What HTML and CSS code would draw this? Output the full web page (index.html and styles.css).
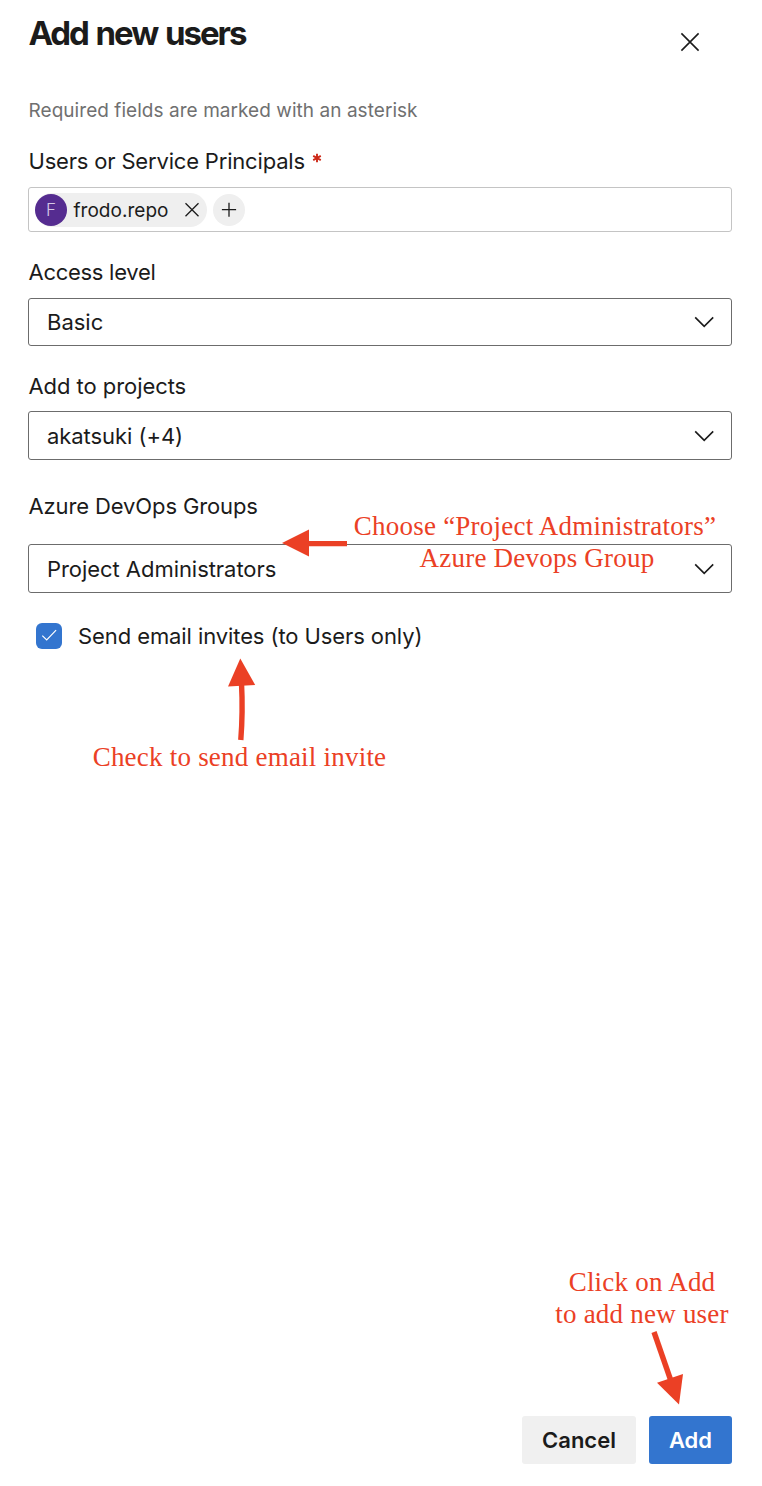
FILE: index.html
```html
<!DOCTYPE html>
<html lang="en">
<head>
<meta charset="utf-8">
<title>Add new users</title>
<link rel="stylesheet" href="styles.css">
</head>
<body>
<main class="panel">
  <header class="header">
    <h1 class="title">Add new users</h1>
    <button class="close" aria-label="Close">
      <svg width="20" height="20" viewBox="0 0 20 20"><path d="M1.4 1.4l17.2 17.2M18.6 1.4L1.4 18.6"/></svg>
    </button>
  </header>

  <p class="hint">Required fields are marked with an asterisk</p>

  <section class="field">
    <div class="label"><span class="t-users">Users or Service Principals</span><svg class="required" width="10" height="10" viewBox="0 0 10 10" aria-label="required"><path d="M5 .8v8.4M1.2 2.9l7.6 4.2M8.8 2.9L1.2 7.1"/></svg></div>
    <div class="picker">
      <div class="chip">
        <span class="avatar">F</span>
        <span class="chip-name">frodo.repo</span>
        <svg class="chip-remove" width="16" height="16" viewBox="0 0 16 16"><path d="M1.5 1.2l13 13M14.5 1.2l-13 13"/></svg>
      </div>
      <button class="add-more" aria-label="Add another">
        <svg width="16" height="16" viewBox="0 0 16 16"><path d="M8 .8v14M.9 7.6h14.2"/></svg>
      </button>
    </div>
  </section>

  <section class="field access">
    <div class="label"><span class="t-access">Access level</span></div>
    <div class="select"><span>Basic</span>
      <svg class="chevron" width="20" height="12" viewBox="0 0 20 12"><path d="M1.2 1.4l9 9 9-9"/></svg>
    </div>
  </section>

  <section class="field projects">
    <div class="label"><span class="t-projects">Add to projects</span></div>
    <div class="select"><span class="t-projects">akatsuki (+4)</span>
      <svg class="chevron" width="20" height="12" viewBox="0 0 20 12"><path d="M1.2 1.4l9 9 9-9"/></svg>
    </div>
  </section>

  <section class="field groups">
    <div class="label"><span class="t-groups">Azure DevOps Groups</span></div>
    <div class="select"><span class="t-admins">Project Administrators</span>
      <svg class="chevron" width="20" height="12" viewBox="0 0 20 12"><path d="M1.2 1.4l9 9 9-9"/></svg>
    </div>
  </section>

  <div class="check-row">
    <span class="checkbox"><svg width="26" height="26" viewBox="0 0 26 26"><path d="M6.3 12.6l4.4 4.3 9.4-9.7"/></svg></span>
    <span class="t-send">Send email invites (to Users only)</span>
  </div>

  <footer class="footer">
    <button class="btn">Cancel</button>
    <button class="btn primary">Add</button>
  </footer>

  <div class="note note-group">Choose “Project Administrators”<div class="second-line">Azure Devops Group</div></div>
  <div class="note note-check">Check to send email invite</div>
  <div class="note note-add">Click on Add<br>to add new user</div>
  <svg class="arrows" width="762" height="1486" viewBox="0 0 762 1486">
    <path class="shaft" d="M347 543.6H306"/>
    <path class="head" d="M282 543L309 529.5V556.5Z"/>
    <path class="shaft" d="M240.8 740Q243 712 241.5 683"/>
    <path class="head" d="M240.3 658.5L255.2 685L228 686.5Z"/>
    <path class="shaft" d="M654 1332L671 1381"/>
    <path class="head" d="M679 1404.5L657 1382.8L683 1374Z"/>
  </svg>
</main>
</body>
</html>
```
FILE: styles.css
```css
* { box-sizing: border-box; }
body { margin: 0; background: #fff; }
button { font: inherit; color: inherit; border: 0; padding: 0; background: none; }
svg { display: block; fill: none; stroke: #1b1b1b; stroke-width: 1.6; }

.panel {
  position: relative;
  display: flex;
  flex-direction: column;
  width: 762px;
  height: 1486px;
  padding: 13px 30px 22px 28px;
  overflow: hidden;
  background: #fff;
  color: #1b1b1b;
  font: 22px/28px Inter, "Liberation Sans", sans-serif;
  white-space: nowrap;
}
.header { display: flex; justify-content: space-between; height: 40px; padding-right: 32px; }
.title {
  margin: 0;
  padding-left: .5px;
  font-size: 33px;
  line-height: 40px;
  font-weight: 650;
  letter-spacing: -2.05px;
  word-spacing: 2px;
}
.close { margin-top: 19px; height: 20px; }
.hint { margin: 46px 0 24px; padding-left: .5px; font-size: 19px; line-height: 24px; letter-spacing: .05px; color: #707070; }
.label { display: flex; padding-left: .5px; }
.required { margin: 6px 0 0 7.5px; stroke: #cd2a19; stroke-width: 1.9; }

.picker {
  display: flex;
  align-items: center;
  gap: 6px;
  height: 45px;
  margin-top: 12px;
  padding-left: 6px;
  border: 1px solid #c4c4c4;
  border-radius: 3px;
}
.chip {
  display: flex;
  align-items: center;
  width: 172px;
  height: 34px;
  border-radius: 17px;
  background: #efefef;
}
.avatar {
  width: 32px;
  height: 32px;
  border-radius: 50%;
  background: #552c90;
  color: #d5c9e5;
  font-size: 17px;
  line-height: 33px;
  font-weight: 300;
  text-align: center;
}
.chip-name { width: 111px; padding: 2px 0 0 6.5px; font-size: 19px; line-height: 28px; letter-spacing: .03px; }
.chip-remove, .add-more svg { stroke-width: 1.3; }
.chip-remove { margin-left: 6px; }
.add-more {
  display: grid;
  place-items: center;
  width: 32px;
  height: 32px;
  border-radius: 50%;
  background: #efefef;
}

.access { margin-top: 26px; }
.projects { margin-top: 26px; }
.groups { margin-top: 32px; }
.select {
  display: flex;
  align-items: center;
  justify-content: space-between;
  height: 49px;
  margin-top: 11px;
  padding: 0 17px 0 18px;
  border: 1px solid #6c6c6c;
  border-radius: 3px;
}
.access .select { height: 48px; margin-top: 12px; }
.groups .select { margin-top: 24px; }

/* Optical tracking per string */
.t-users { letter-spacing: -.18px; }
.t-access { letter-spacing: -.28px; }
.t-projects { letter-spacing: -.06px; }
.t-groups { letter-spacing: -.12px; }
.t-admins { letter-spacing: -.05px; }
.t-send { letter-spacing: -.09px; }

.check-row { display: flex; align-items: center; gap: 16px; margin: 29px 0 0 8px; }
.checkbox { width: 26px; height: 26px; border-radius: 6px; background: #3375cf; }
.checkbox svg { stroke: #fff; stroke-width: 1.2; }

.footer { display: flex; justify-content: flex-end; gap: 13px; margin-top: auto; }
.btn { width: 114px; height: 48px; border-radius: 3px; background: #f0f0f0; font-weight: 600; text-align: center; }
.primary { width: 83px; background: #3375cf; color: #fff; }

/* Callouts laid over the form */
.note {
  position: absolute;
  color: #eb4025;
  font: 27px/32px "Liberation Serif", serif;
  letter-spacing: .22px;
  text-align: center;
}
.note-group { left: 352px; top: 510px; width: 366px; }
.second-line { padding-left: 4px; }
.note-check { left: 91px; top: 741px; width: 297px; }
.note-add { left: 554px; top: 1266px; width: 176px; }
.arrows { position: absolute; left: 0; top: 0; pointer-events: none; }
.arrows .shaft { stroke: #eb4025; stroke-width: 5.4; }
.arrows .head { fill: #eb4025; stroke: none; }
```
